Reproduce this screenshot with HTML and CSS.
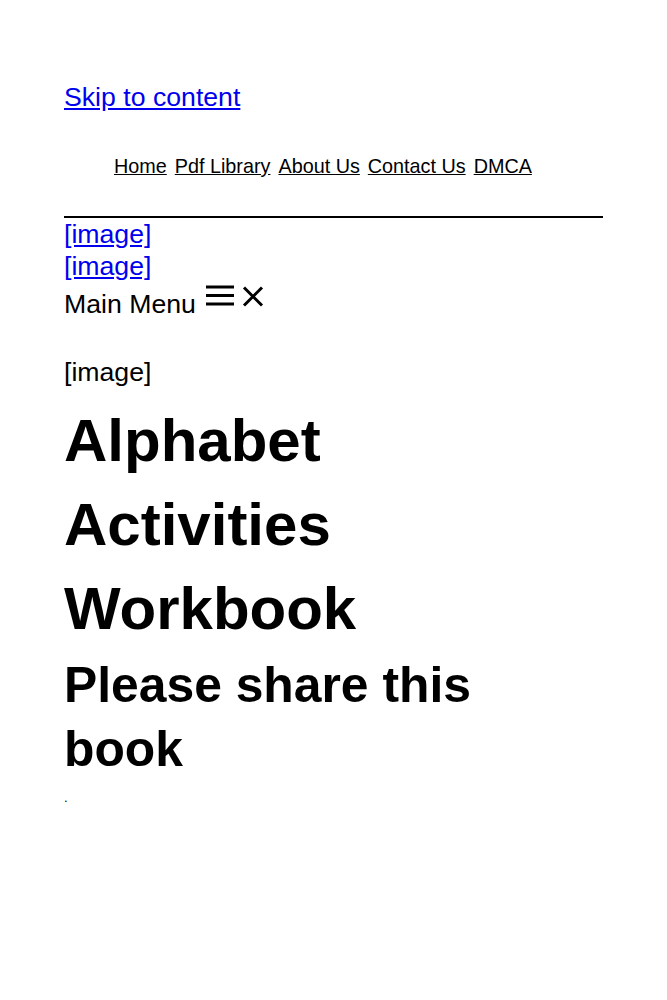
FILE: index.html
```html
<!DOCTYPE html>
<html lang="en">
<head>
<meta charset="utf-8">
<title>Alphabet Activities Workbook</title>
<link rel="stylesheet" href="styles.css">
</head>
<body>
<div class="page">
  <header class="header">
    <a class="skip" href="#content">Skip to content</a>
    <nav class="topnav">
      <a href="#">Home</a>
      <a href="#">Pdf Library</a>
      <a href="#">About Us</a>
      <a href="#">Contact Us</a>
      <a href="#">DMCA</a>
    </nav>
    <hr class="rule">
    <a class="imglink" href="#">[image]</a>
    <a class="imglink" href="#">[image]</a>
    <div class="menu-row">
      <span class="menu-label">Main Menu</span>
      <svg class="icon-burger" width="28" height="21" viewBox="0 0 28 21" aria-hidden="true">
        <path d="M0 2H28M0 10.5H28M0 19H28" stroke="#000" stroke-width="3" fill="none"/>
      </svg>
      <svg class="icon-close" width="22" height="21" viewBox="0 0 22 21" aria-hidden="true">
        <path d="M2 1.5L20 19.5M20 1.5L2 19.5" stroke="#000" stroke-width="3" fill="none"/>
      </svg>
    </div>
  </header>
  <main id="content" class="content">
    <p class="img-ph">[image]</p>
    <h1 class="title">Alphabet Activities Workbook</h1>
    <h2 class="share">Please share this book</h2>
    <p class="dot">.</p>
  </main>
</div>
</body>
</html>
```

FILE: styles.css
```css
html, body {
  margin: 0;
  padding: 0;
  background: #fff;
}
body {
  font-family: "Liberation Sans", Arial, sans-serif;
  font-size: 26.67px;
  line-height: 32px;
  color: #000;
}
.page {
  padding: 81px 64px 0 64px;
}
.header {
  display: flex;
  flex-direction: column;
  align-items: flex-start;
}
.skip {
  color: #0000ee;
  text-decoration: underline;
  line-height: 32px;
}
.topnav {
  display: flex;
  gap: 8px;
  margin-top: 41px;
  padding-left: 50px;
  font-size: 19.8px;
  line-height: 24px;
}
.topnav a {
  color: #000;
  text-decoration: underline;
}
.rule {
  align-self: stretch;
  margin: 38px 0 0 0;
  border: 0;
  border-top: 2px solid #000;
  height: 0;
}
.imglink {
  color: #0000ee;
  text-decoration: underline;
  line-height: 32px;
}
.menu-row {
  display: flex;
  align-items: flex-start;
}
.menu-label {
  margin-top: 6px;
  line-height: 32px;
}
.icon-burger {
  margin-top: 3px;
  margin-left: 10px;
}
.icon-close {
  margin-top: 4px;
  margin-left: 8px;
}
.content {
  margin-top: 36px;
  max-width: 500px;
}
.img-ph {
  margin: 0;
  line-height: 32px;
}
.title {
  margin: 11px 0 0 0;
  font-size: 60px;
  line-height: 84px;
  font-weight: bold;
}
.share {
  margin: 2px 0 0 0;
  font-size: 49.8px;
  line-height: 64px;
  font-weight: bold;
}
.dot {
  margin: 11px 0 0 0;
  font-size: 13px;
  line-height: 12px;
}
```
